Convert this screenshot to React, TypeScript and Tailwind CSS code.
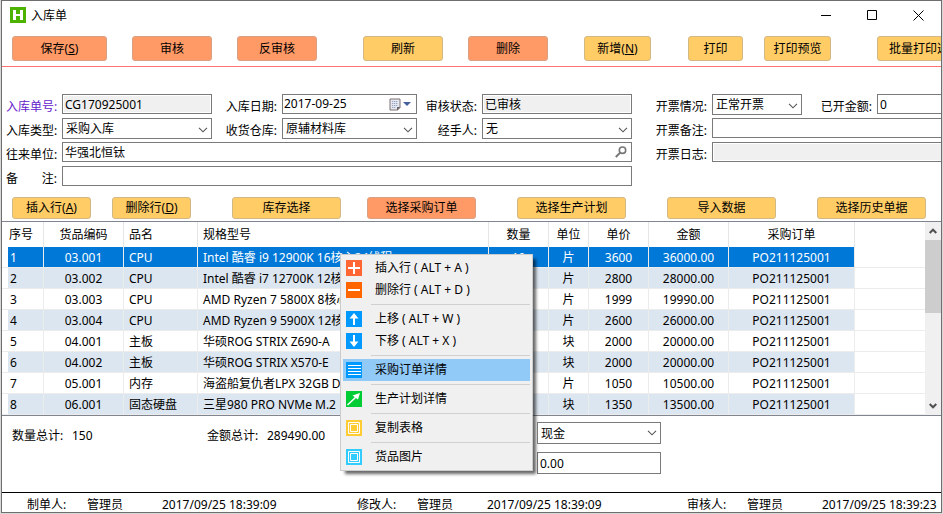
import clsx from "clsx";
import type { ReactNode } from "react";

const toolbar = [
  { label: "保存", hotkey: "S", tone: "orange", box: "ml-[10px] w-[95px]" },
  { label: "审核", tone: "orange", box: "ml-[25px] w-20" },
  { label: "反审核", tone: "orange", box: "ml-[25px] w-20" },
  { label: "刷新", tone: "yellow", box: "ml-[46px] w-20" },
  { label: "删除", tone: "orange", box: "ml-[25px] w-20" },
  { label: "新增", hotkey: "N", tone: "yellow", box: "ml-9 w-[67px]" },
  { label: "打印", tone: "yellow", box: "ml-[37px] w-[55px]" },
  { label: "打印预览", tone: "yellow", box: "ml-[21px] w-[67px]" },
  { label: "批量打印选择", tone: "yellow", box: "ml-[46px] w-24" },
];

const rowActions = [
  { label: "插入行", hotkey: "A", tone: "yellow", box: "ml-[10px] w-[79px]" },
  { label: "删除行", hotkey: "D", tone: "yellow", box: "ml-[21px] w-[79px]" },
  { label: "库存选择", tone: "yellow", box: "ml-[41px] w-[109px]" },
  { label: "选择采购订单", tone: "orange", box: "ml-[26px] w-[109px]" },
  { label: "选择生产计划", tone: "yellow", box: "ml-[41px] w-[109px]" },
  { label: "导入数据", tone: "yellow", box: "ml-[41px] w-[109px]" },
  { label: "选择历史单据", tone: "yellow", box: "ml-[41px] w-[109px]" },
];

const columns = [
  { title: "序号", width: "w-9", cell: "pl-[2px]" },
  { title: "货品编码", width: "w-20", cell: "text-center" },
  { title: "品名", width: "w-[74px]", cell: "pl-[5px]" },
  { title: "规格型号", width: "w-[291px]", cell: "pl-[5px]" },
  { title: "数量", width: "w-[60px]", cell: "text-center" },
  { title: "单位", width: "w-10", cell: "text-center" },
  { title: "单价", width: "w-[60px]", cell: "text-center" },
  { title: "金额", width: "w-20", cell: "text-center" },
  { title: "采购订单", width: "w-[126px]", cell: "text-center" },
];

const rows = [
  ["1", "03.001", "CPU", "Intel 酷睿 i9 12900K 16核心24线程", "10", "片", "3600", "36000.00", "PO211125001"],
  ["2", "03.002", "CPU", "Intel 酷睿 i7 12700K 12核心20线程", "10", "片", "2800", "28000.00", "PO211125001"],
  ["3", "03.003", "CPU", "AMD Ryzen 7 5800X 8核心16线程", "10", "片", "1999", "19990.00", "PO211125001"],
  ["4", "03.004", "CPU", "AMD Ryzen 9 5900X 12核心24线程", "10", "片", "2600", "26000.00", "PO211125001"],
  ["5", "04.001", "主板", "华硕ROG STRIX Z690-A", "10", "块", "2000", "20000.00", "PO211125001"],
  ["6", "04.002", "主板", "华硕ROG STRIX X570-E", "10", "块", "2000", "20000.00", "PO211125001"],
  ["7", "05.001", "内存", "海盗船复仇者LPX 32GB DDR4", "10", "片", "1050", "10500.00", "PO211125001"],
  ["8", "06.001", "固态硬盘", "三星980 PRO NVMe M.2", "10", "块", "1350", "13500.00", "PO211125001"],
];

const signers = [
  { role: "制单人:", time: "2017/09/25 18:39:09", nameWidth: "w-[75px]" },
  { role: "修改人:", time: "2017/09/25 18:39:09", nameWidth: "w-[70px]" },
  { role: "审核人:", time: "2017/09/25 18:39:23", nameWidth: "w-[75px]" },
];

type ButtonProps = {
  label: string;
  hotkey?: string;
  tone: string;
  box: string;
  height: string;
};

function ActionButton({ label, hotkey, tone, box, height }: ButtonProps) {
  return (
    <button
      type="button"
      className={clsx(
        "shrink-0 rounded-[3px] border text-center leading-4 whitespace-nowrap",
        tone === "orange"
          ? "border-[#d9a083] bg-[#ff9966]"
          : "border-[#d3b885] bg-[#ffcc66]",
        height,
        box,
      )}
    >
      {label}
      {hotkey && (
        <>
          (<span className="underline">{hotkey}</span>)
        </>
      )}
    </button>
  );
}

function Chevron() {
  return (
    <svg
      className="pointer-events-none absolute top-1/2 right-1 -translate-y-1/2"
      width="10"
      height="6"
      viewBox="0 0 10 6"
      fill="none"
      stroke="#555"
      strokeWidth="1.1"
    >
      <path d="M1 0.8 5 4.8 9 0.8" />
    </svg>
  );
}

function Label({ id, className, children }: { id: string; className: string; children: ReactNode }) {
  return (
    <label htmlFor={id} className={clsx("shrink-0 pt-[5px] leading-4 whitespace-nowrap", className)}>
      {children}
    </label>
  );
}

function TextBox({ id, value, className, readOnly }: { id: string; value: string; className: string; readOnly?: boolean }) {
  return (
    <input
      id={id}
      defaultValue={value}
      readOnly={readOnly}
      className={clsx(
        "h-5 shrink-0 border border-[#7a7a7a] px-[2px] outline-none",
        readOnly ? "bg-[#f0f0f0] shadow-[inset_0_0_0_1px_#fff]" : "bg-white",
        className,
      )}
    />
  );
}

function Select({ id, value, className, height = "h-[21px]" }: { id: string; value: string; className: string; height?: string }) {
  return (
    <div className={clsx("relative shrink-0", className)}>
      <select
        id={id}
        defaultValue={value}
        className={clsx("block w-full appearance-none border border-[#7a7a7a] bg-white pt-px pl-[3px] outline-none", height)}
      >
        <option>{value}</option>
      </select>
      <Chevron />
    </div>
  );
}

function MenuIcon({ color, children }: { color: string; children: ReactNode }) {
  return (
    <svg width="16" height="16" viewBox="0 0 16 16" fill="none" stroke="#fff" className="shrink-0">
      <rect width="16" height="16" fill={color} stroke="none" />
      {children}
    </svg>
  );
}

function MenuItem({ icon, text, active }: { icon: ReactNode; text: string; active?: boolean }) {
  return (
    <li role="none">
      <button
        type="button"
        role="menuitem"
        className={clsx("flex h-[22px] w-full items-center gap-[13px] pl-[3px] whitespace-nowrap", active && "bg-[#91c9f7]")}
      >
        {icon}
        {text}
      </button>
    </li>
  );
}

function MenuLine() {
  return <li role="separator" className="my-[3px] ml-7 h-px bg-[#d0d0d0]" />;
}

function ContextMenu() {
  return (
    <ul
      role="menu"
      className="absolute top-8 left-[338px] w-[193px] border border-[#ccc] bg-[#f0f0f0] p-[2px] shadow-[4px_4px_3px_-1px_rgba(0,0,0,0.6)]"
    >
      <MenuItem
        text="插入行 ( ALT + A )"
        icon={
          <MenuIcon color="#ff6633">
            <path d="M8 2v12M2 8h12" strokeWidth="2" />
          </MenuIcon>
        }
      />
      <MenuItem
        text="删除行 ( ALT + D )"
        icon={
          <MenuIcon color="#ff6600">
            <path d="M2 8h12" strokeWidth="2" />
          </MenuIcon>
        }
      />
      <MenuLine />
      <MenuItem
        text="上移 ( ALT + W )"
        icon={
          <MenuIcon color="#0099ff">
            <path d="M8 14V5" strokeWidth="2" />
            <path d="M8 2 12.5 7.5H3.5z" fill="#fff" stroke="none" />
          </MenuIcon>
        }
      />
      <MenuItem
        text="下移 ( ALT + X )"
        icon={
          <MenuIcon color="#0099ff">
            <path d="M8 2v9" strokeWidth="2" />
            <path d="M8 14 3.5 8.5h9z" fill="#fff" stroke="none" />
          </MenuIcon>
        }
      />
      <MenuLine />
      <MenuItem
        active
        text="采购订单详情"
        icon={
          <MenuIcon color="#0099ff">
            <path d="M2 3.5h13M2 6.5h13M2 9.5h13M2 12.5h13" />
          </MenuIcon>
        }
      />
      <MenuLine />
      <MenuItem
        text="生产计划详情"
        icon={
          <MenuIcon color="#00cc33">
            <path d="M1.5 14 10 6" strokeWidth="1.5" />
            <path d="M14 2 12 8.5 6.5 4.5z" fill="#fff" stroke="none" />
          </MenuIcon>
        }
      />
      <MenuLine />
      <MenuItem
        text="复制表格"
        icon={
          <MenuIcon color="#ffcc33">
            <path d="M2.5 2.5h11v11h-11zM4.5 4.5h7v7h-7z" />
          </MenuIcon>
        }
      />
      <MenuLine />
      <MenuItem
        text="货品图片"
        icon={
          <MenuIcon color="#33ccff">
            <path d="M2.5 2.5h11v11h-11zM4.5 4.5h7v7h-7z" />
          </MenuIcon>
        }
      />
    </ul>
  );
}

function TitleBar() {
  return (
    <header className="flex h-[35px] items-start pl-2">
      <svg width="16" height="16" viewBox="0 0 16 16" className="mt-[6px]">
        <rect width="16" height="16" fill="#4db300" />
        <path d="M3 3h3v4h4V3h3v10h-3V9H6v4H3z" fill="#fff" />
      </svg>
      <h1 className="mt-[7px] ml-[5px] leading-4">入库单</h1>
      <div className="ml-auto flex">
        <button type="button" aria-label="最小化" className="flex h-7 w-[45px] items-center justify-center">
          <svg width="11" height="11" stroke="#000" fill="none">
            <path d="M0 5.5h10" />
          </svg>
        </button>
        <button type="button" aria-label="最大化" className="flex h-7 w-[46px] items-center justify-center">
          <svg width="11" height="11" stroke="#000" fill="none">
            <path d="M0.5 0.5h9v9h-9z" />
          </svg>
        </button>
        <button type="button" aria-label="关闭" className="flex h-7 w-[46px] items-center justify-center">
          <svg width="11" height="11" stroke="#000" fill="none">
            <path d="M0.5 0.5l10 10M10.5 0.5l-10 10" />
          </svg>
        </button>
      </div>
    </header>
  );
}

function OrderForm() {
  return (
    <form className="flex">
      <div className="flex shrink-0 flex-col">
        <div className="flex h-6">
          <Label id="no" className="w-[60px] pl-1 text-[#6622cc]">入库单号:</Label>
          <TextBox id="no" value="CG170925001" readOnly className="w-[150px]" />
          <Label id="date" className="w-[70px] pr-[5px] text-right">入库日期:</Label>
          <div className="flex h-5 w-[135px] items-center border border-[#7a7a7a] bg-white">
            <input id="date" defaultValue="2017-09-25" className="h-4 min-w-0 flex-1 pl-px outline-none" />
            <button type="button" aria-label="选择日期" className="flex items-center gap-[2px] pr-[5px]">
              <svg width="12" height="13" viewBox="0 0 12 13" fill="none">
                <path d="M1 1h10v8.5L8.5 12H1z" fill="#e4e8f2" stroke="#7d7270" />
                <path d="M3 3.5h6M3 5.5h6M3 7.5h6M3 9.5h4" stroke="#9aa3bd" strokeDasharray="1.3 0.7" />
                <path d="M8 12.5 11.5 9H8z" fill="#6b6468" />
              </svg>
              <svg width="8" height="4" viewBox="0 0 8 4">
                <path d="M0 0h8L4 4z" fill="#44619d" />
              </svg>
            </button>
          </div>
          <Label id="state" className="w-[65px] pr-[5px] text-right">审核状态:</Label>
          <TextBox id="state" value="已审核" readOnly className="w-[150px]" />
        </div>
        <div className="flex h-6">
          <Label id="kind" className="w-[60px] pl-1">入库类型:</Label>
          <Select id="kind" value="采购入库" className="w-[150px]" />
          <Label id="store" className="w-[70px] pr-[5px] text-right">收货仓库:</Label>
          <Select id="store" value="原辅材料库" className="w-[135px]" />
          <Label id="handler" className="w-[65px] pr-[5px] text-right">经手人:</Label>
          <Select id="handler" value="无" className="w-[150px]" />
        </div>
        <div className="flex h-6">
          <Label id="partner" className="w-[60px] pl-1">往来单位:</Label>
          <div className="flex h-5 flex-1 items-center border border-[#7a7a7a] bg-white">
            <input id="partner" defaultValue="华强北恒钛" className="h-[18px] min-w-0 flex-1 pl-[2px] outline-none" />
            <button type="button" aria-label="查找" className="pr-1">
              <svg width="12" height="12" viewBox="0 0 12 12" fill="none" stroke="#777">
                <circle cx="7.5" cy="4.2" r="3.2" strokeWidth="1.6" />
                <path d="M5.2 6.6 0.8 11" strokeWidth="2" />
              </svg>
            </button>
          </div>
        </div>
        <div className="flex h-5">
          <Label id="remark" className="flex w-[60px] justify-between pr-[5px] pl-1">
            <span>备</span>
            <span>注:</span>
          </Label>
          <TextBox id="remark" value="" className="flex-1" />
        </div>
      </div>
      <div className="flex min-w-0 flex-1 flex-col">
        <div className="flex h-6">
          <Label id="invoice" className="w-20 pr-[5px] text-right">开票情况:</Label>
          <Select id="invoice" value="正常开票" className="w-[90px]" />
          <Label id="paid" className="w-[75px] pr-[5px] text-right">已开金额:</Label>
          <TextBox id="paid" value="0" className="w-20" />
        </div>
        <div className="flex h-6">
          <Label id="invoiceNote" className="w-20 pr-[5px] text-right">开票备注:</Label>
          <TextBox id="invoiceNote" value="" className="w-full" />
        </div>
        <div className="flex h-6">
          <Label id="invoiceLog" className="w-20 pr-[5px] text-right">开票日志:</Label>
          <TextBox id="invoiceLog" value="" readOnly className="w-full" />
        </div>
      </div>
    </form>
  );
}

function ItemTable() {
  return (
    <table className="w-full table-fixed border-separate border-spacing-0">
      <thead>
        <tr className="h-[25px]">
          <th className="w-[6px] p-0" />
          {columns.map((c, i) => (
            <th
              key={c.title}
              className={clsx(
                "border-r border-[#e5e5e5] p-0 font-normal",
                c.width,
                i === 0 ? "pl-px" : c.cell,
                c.cell !== "text-center" && "text-left",
              )}
            >
              {c.title}
            </th>
          ))}
          <th className="p-0" />
        </tr>
      </thead>
      <tbody>
        {rows.map((row, r) => (
          <tr key={row[0]} className="h-[21px]">
            <td className="border-b border-[#ececec] p-0" />
            {row.map((text, i) => (
              <td
                key={i}
                className={clsx(
                  "overflow-hidden border-r border-b border-[#ececec] pt-[2px] pr-0 pb-0 leading-4 whitespace-nowrap",
                  columns[i].cell,
                  r === 0 && "bg-[#0078d7] bg-clip-padding text-white",
                  r % 2 === 1 && "bg-[#dce6f0] bg-clip-padding",
                )}
              >
                {text}
              </td>
            ))}
            <td className="border-b border-[#ececec] p-0" />
          </tr>
        ))}
      </tbody>
    </table>
  );
}

function ScrollBar() {
  return (
    <div className="flex w-4 shrink-0 flex-col items-center bg-[#f0f0f0]">
      <button type="button" aria-label="向上滚动" className="flex h-[18px] items-center">
        <svg width="8" height="6" viewBox="0 0 8 6" fill="none" stroke="#505050" strokeWidth="2">
          <path d="M0.7 5 4 1.7 7.3 5" />
        </svg>
      </button>
      <div className="h-[73px] w-full bg-[#cdcdcd]" />
      <button type="button" aria-label="向下滚动" className="mt-auto flex h-[18px] items-center">
        <svg width="8" height="6" viewBox="0 0 8 6" fill="none" stroke="#505050" strokeWidth="2">
          <path d="M0.7 1 4 4.3 7.3 1" />
        </svg>
      </button>
    </div>
  );
}

export default function App() {
  return (
    <div className="overflow-hidden bg-[#d8d8d8] px-px pb-px font-['Noto_Sans','Noto_Sans_CJK_SC',sans-serif] text-xs text-black">
      <div className="overflow-hidden border border-[#6e6e6e] bg-white">
        <TitleBar />
        <div className="flex border-b border-[#ff7373] pb-[5px]">
          {toolbar.map((b) => (
            <ActionButton key={b.label} {...b} height="h-[25px]" />
          ))}
        </div>

        <div className="pt-[27px] pb-[11px]">
          <OrderForm />
        </div>

        <div className="flex pb-[2px]">
          {rowActions.map((b) => (
            <ActionButton key={b.label} {...b} height="h-[22px]" />
          ))}
        </div>

        <div className="relative flex border-y border-[#80858f]">
          <div className="min-w-0 flex-1">
            <ItemTable />
          </div>
          <ScrollBar />
          <ContextMenu />
        </div>

        <div className="flex items-start border-b border-black pt-[6px] pb-[18px]">
          <dl className="flex pt-[6px] pl-[10px] leading-4">
            <dt className="w-[60px]">数量总计:</dt>
            <dd className="w-[135px]">150</dd>
            <dt className="w-[60px]">金额总计:</dt>
            <dd className="w-[270px]">289490.00</dd>
          </dl>
          <div className="flex w-[124px] flex-col gap-2">
            <Select id="payment" value="现金" className="w-full" height="h-[22px]" />
            <input
              aria-label="付款金额"
              defaultValue="0.00"
              className="h-[22px] w-full border border-[#7a7a7a] bg-white px-[2px] outline-none"
            />
          </div>
        </div>

        <footer className="flex h-[19px] overflow-hidden pt-1 leading-4 whitespace-nowrap">
          {signers.map((s) => (
            <div key={s.role} className="flex w-[330px] shrink-0 pl-[25px]">
              <span className="w-[60px]">{s.role}</span>
              <span className={s.nameWidth}>管理员</span>
              <time>{s.time}</time>
            </div>
          ))}
        </footer>
      </div>
    </div>
  );
}
